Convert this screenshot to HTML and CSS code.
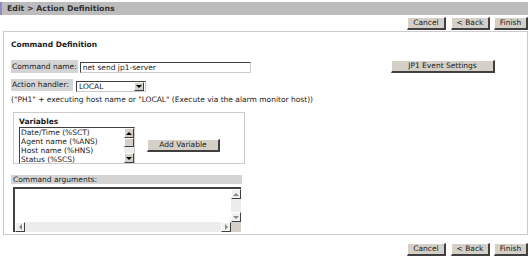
FILE: index.html
```html
<!DOCTYPE html>
<html lang="en">
  <head>
    <meta charset="UTF-8" />
    <title>Action Definitions</title>
    <link rel="stylesheet" href="styles.css">
  </head>
  <body>
    <div class="title-bar">Edit &gt; Action Definitions</div>

    <div class="button-row">
      <button class="btn btn-cancel">Cancel</button>
      <button class="btn btn-back">&lt; Back</button>
      <button class="btn btn-finish">Finish</button>
    </div>

    <div class="panel">
      <h2 class="section-title">Command Definition</h2>

      <div class="field-row">
        <span class="field-label name-label">Command name:</span>
        <input type="text" class="text-input" value="net send jp1-server" />
        <button class="btn btn-jp1">JP1 Event Settings</button>
      </div>

      <div class="field-row handler-row">
        <span class="field-label">Action handler:</span>
        <div class="select-box">
          <span class="select-value">LOCAL</span>
          <span class="select-arrow"><span class="arrow-down"></span></span>
        </div>
      </div>
      <p class="note">("PH1" + executing host name or "LOCAL" (Execute via the alarm monitor host))</p>

      <div class="variables-box">
        <div class="variables-left">
          <div class="sub-title">Variables</div>
          <div class="listbox">
            <div class="list-items">
              <div>Date/Time (%SCT)</div>
              <div>Agent name (%ANS)</div>
              <div>Host name (%HNS)</div>
              <div>Status (%SCS)</div>
            </div>
            <div class="vscroll">
              <span class="sb-btn"><span class="arrow-up"></span></span>
              <span class="sb-thumb"></span>
              <span class="sb-track"></span>
              <span class="sb-btn"><span class="arrow-down"></span></span>
            </div>
          </div>
        </div>
        <button class="btn btn-add">Add Variable</button>
      </div>

      <div class="args-header">Command arguments:</div>
      <div class="textarea-box">
        <div class="textarea-main">
          <div class="textarea-text"></div>
          <div class="vscroll vscroll-light">
            <span class="sb-btn"><span class="arrow-up small"></span></span>
            <span class="sb-track"></span>
            <span class="sb-btn"><span class="arrow-down small"></span></span>
          </div>
        </div>
        <div class="hscroll">
          <span class="sb-btn"><span class="arrow-left"></span></span>
          <span class="sb-track"></span>
          <span class="sb-btn"><span class="arrow-right"></span></span>
          <span class="sb-corner"></span>
        </div>
      </div>
    </div>

    <div class="button-row bottom-row">
      <button class="btn btn-cancel">Cancel</button>
      <button class="btn btn-back">&lt; Back</button>
      <button class="btn btn-finish">Finish</button>
    </div>
  </body>
</html>
```

FILE: styles.css
```css
body {
  margin: 0;
  background-color: #ffffff;
  font-family: "DejaVu Sans", Verdana, sans-serif;
  font-size: 7.5px;
  color: #1a1a1a;
  width: 532px;
}

.title-bar {
  margin: 2px 4px 0 0;
  height: 13px;
  line-height: 13px;
  padding-left: 5px;
  background-color: #bcbcbc;
  border-left: 2px solid #8c8cc8;
  font-weight: bold;
  font-size: 7.8px;
  color: #333333;
}

.button-row {
  display: flex;
  justify-content: flex-end;
  gap: 4px;
  margin: 2px 4px 0 0;
}

.bottom-row {
  margin-top: 8px;
}

.btn {
  font-family: "DejaVu Sans", Verdana, sans-serif;
  font-size: 7.5px;
  color: #1a1a1a;
  background-color: #d4d0c8;
  border-top: 1px solid #ffffff;
  border-left: 1px solid #ffffff;
  border-right: 2px solid #404040;
  border-bottom: 2px solid #404040;
  height: 13px;
  padding: 0;
  line-height: 10px;
}

.btn-cancel {
  width: 39px;
  margin-right: 1px;
}

.btn-back {
  width: 39px;
}

.btn-finish {
  width: 34px;
}

/* panel */
.panel {
  margin: 1px 4px 0 3px;
  border: 1px solid #cccccc;
  padding: 7px 7px 0 7px;
  height: 195px;
}

.section-title {
  font-size: 7.5px;
  font-weight: bold;
  line-height: 10px;
  height: 10px;
  margin: 1px 0 10px 0;
  color: #1a1a1a;
}

.field-row {
  display: flex;
  align-items: center;
  height: 13px;
}

.field-label {
  background-color: #d4d4d4;
  height: 13px;
  line-height: 13px;
  padding: 0 2px 0 1px;
  margin-right: 3px;
  white-space: nowrap;
}

.name-label {
  padding: 0 1px 0 1px;
  margin-right: 2px;
}

.text-input {
  font-family: "DejaVu Sans", Verdana, sans-serif;
  font-size: 7.5px;
  color: #1a1a1a;
  width: 171px;
  height: 11px;
  padding: 0 2px;
  box-sizing: border-box;
  border-top: 1px solid #404040;
  border-left: 1px solid #404040;
  border-right: 1px solid #cccccc;
  border-bottom: 1px solid #cccccc;
  margin-top: 1px;
}

.btn-jp1 {
  margin-left: auto;
  margin-right: 25px;
  width: 104px;
  height: 13px;
}

.handler-row {
  margin-top: 6px;
  height: 12px;
}

.handler-row .field-label {
  width: 59px;
  height: 12px;
  line-height: 11px;
}

.select-box {
  display: flex;
  box-sizing: border-box;
  width: 70px;
  height: 11px;
  margin-top: 3px;
  border-top: 1px solid #404040;
  border-left: 1px solid #404040;
  border-right: 1px solid #cccccc;
  border-bottom: 1px solid #cccccc;
}

.select-value {
  flex: 1;
  padding-left: 2px;
  line-height: 9px;
}

.select-arrow {
  width: 8px;
  height: 7px;
  margin: 0 1px 0 0;
  background-color: #d4d0c8;
  border-top: 1px solid #ffffff;
  border-left: 1px solid #ffffff;
  border-right: 1px solid #404040;
  border-bottom: 1px solid #404040;
  display: flex;
  align-items: center;
  justify-content: center;
}

.arrow-down,
.arrow-up,
.arrow-left,
.arrow-right {
  width: 0;
  height: 0;
  border: 3px solid transparent;
}

.arrow-down {
  border-top: 3px solid #000000;
  border-bottom-width: 0;
}

.arrow-up {
  border-bottom: 3px solid #000000;
  border-top-width: 0;
}

.arrow-left {
  border-right: 3px solid #888888;
  border-left-width: 0;
}

.arrow-right {
  border-left: 3px solid #888888;
  border-right-width: 0;
}

.arrow-up.small {
  border-bottom-color: #888888;
}

.arrow-down.small {
  border-top-color: #888888;
}

.note {
  margin: 4px 0 0 0;
  line-height: 10px;
  height: 10px;
}

/* variables */
.variables-box {
  display: flex;
  box-sizing: border-box;
  width: 232px;
  height: 52px;
  margin: 7px 0 0 2px;
  padding: 4px 0 0 5px;
  border: 1px solid #cccccc;
}

.sub-title {
  font-weight: bold;
  line-height: 9px;
  height: 9px;
}

.listbox {
  display: flex;
  box-sizing: border-box;
  width: 116px;
  height: 37px;
  margin-top: 1px;
  border-top: 1px solid #404040;
  border-left: 1px solid #404040;
  border-right: 1px solid #cccccc;
  border-bottom: 1px solid #cccccc;
}

.list-items {
  flex: 1;
  line-height: 9px;
  padding-left: 1px;
  overflow: hidden;
}

.vscroll {
  display: flex;
  flex-direction: column;
  width: 10px;
}

.sb-btn {
  width: 8px;
  height: 8px;
  background-color: #d4d0c8;
  border-top: 1px solid #ffffff;
  border-left: 1px solid #ffffff;
  border-right: 1px solid #404040;
  border-bottom: 1px solid #404040;
  display: flex;
  align-items: center;
  justify-content: center;
}

.sb-track {
  flex: 1;
  background-color: #ececec;
}

.sb-thumb {
  height: 7px;
  width: 8px;
  background-color: #d4d0c8;
  border-top: 1px solid #ffffff;
  border-left: 1px solid #ffffff;
  border-right: 1px solid #404040;
  border-bottom: 1px solid #404040;
}

.btn-add {
  margin-left: 12px;
  margin-top: 22px;
  width: 73px;
  height: 13px;
}

/* command arguments */
.args-header {
  margin-top: 11px;
  width: 229px;
  background-color: #d4d4d4;
  height: 9px;
  line-height: 9px;
  padding-left: 2px;
}

.textarea-box {
  box-sizing: border-box;
  margin: 3px 0 0 2px;
  width: 228px;
  height: 45px;
  border-top: 2px solid #404040;
  border-left: 2px solid #404040;
  background-color: #d4d0c8;
}

.textarea-main {
  display: flex;
  height: 33px;
}

.textarea-text {
  flex: 1;
  background-color: #ffffff;
}

.vscroll-light .sb-btn {
  background-color: #f0f0f0;
}

.hscroll {
  display: flex;
  height: 10px;
}

.hscroll .sb-btn {
  background-color: #f0f0f0;
}

.hscroll .sb-track {
  flex: 1;
}

.sb-corner {
  width: 10px;
  background-color: #d4d0c8;
}
```
